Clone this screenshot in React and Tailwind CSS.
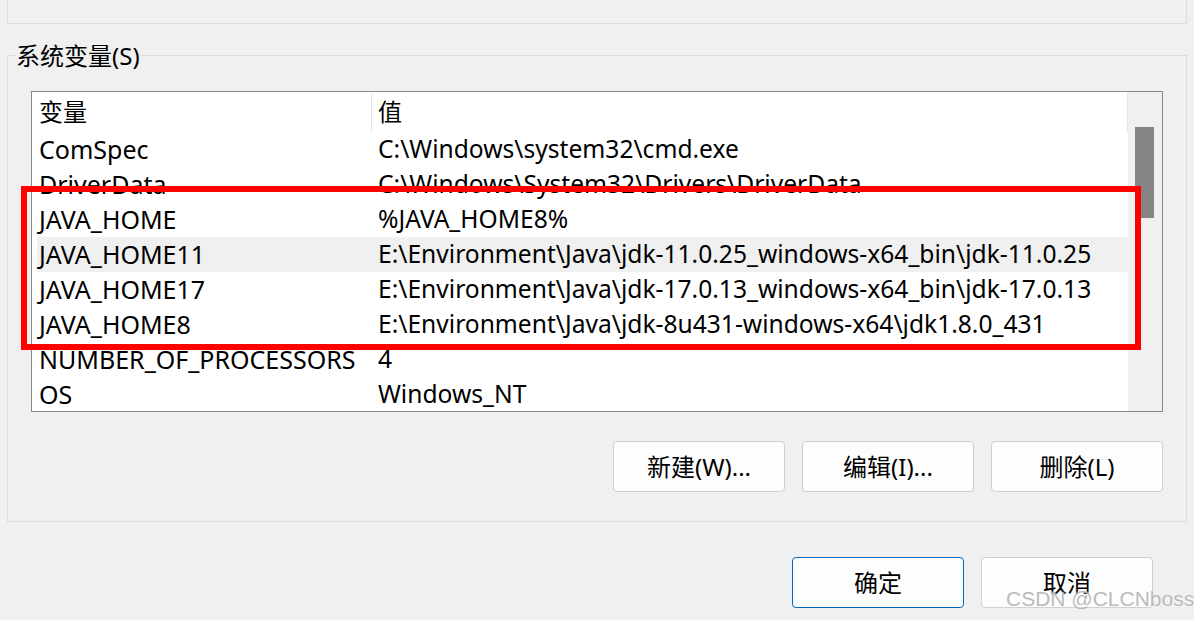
const ROWS = [
  ["ComSpec", "C:\\Windows\\system32\\cmd.exe"],
  ["DriverData", "C:\\Windows\\System32\\Drivers\\DriverData"],
  ["JAVA_HOME", "%JAVA_HOME8%"],
  ["JAVA_HOME11", "E:\\Environment\\Java\\jdk-11.0.25_windows-x64_bin\\jdk-11.0.25"],
  ["JAVA_HOME17", "E:\\Environment\\Java\\jdk-17.0.13_windows-x64_bin\\jdk-17.0.13"],
  ["JAVA_HOME8", "E:\\Environment\\Java\\jdk-8u431-windows-x64\\jdk1.8.0_431"],
  ["NUMBER_OF_PROCESSORS", "4"],
  ["OS", "Windows_NT"],
];

export default function App() {
  return (
    <div
      className="relative w-[1194px] h-[620px] overflow-hidden bg-[#f0f0f0] text-black"
      style={{ fontFamily: '"Noto Sans", "Noto Sans CJK SC", sans-serif' }}
    >
      {/* user variables panel, cut off at the top */}
      <div className="mx-[7px] h-[24px] border-x border-b border-[#dcdcdc]" />

      <fieldset className="mx-[7px] mt-[18px] border border-[#dcdcdc] px-[23px] pb-[29px]">
        <legend className="-ml-[15px] text-[24px] leading-[26px] pt-[1px]">系统变量(S)</legend>

        <div className="mt-[22px] h-[321px] border border-[#828790] bg-white flex overflow-hidden">
          <div className="flex-1 min-w-0">
            <div className="flex h-[40px] items-center text-[24px]">
              <div className="w-[339px] h-full pl-[7px] flex items-center">变量</div>
              <div className="w-px h-[39px] self-start mt-[1px] bg-[#e5e5e5]" />
              <div className="flex-1 h-full pl-[6px] flex items-center">值</div>
              <div className="w-px h-[39px] self-start mt-[1px] bg-[#e5e5e5]" />
            </div>
            {ROWS.map(([name, value]) => (
              <div
                key={name}
                className={`flex h-[35px] items-center whitespace-nowrap ${
                  name === "JAVA_HOME11" ? "bg-[#f0f0f0] ml-[5px] pl-[2px]" : "pl-[7px]"
                }`}
              >
                <div className="w-[339px] shrink-0 text-[25px]">{name}</div>
                <div className="text-[24.6px]">{value}</div>
              </div>
            ))}
          </div>
          <div className="w-[34px] shrink-0 bg-[#f0f0f0] pt-[35px] pl-[7px]">
            <div className="w-[19px] h-[91px] bg-[#858585]" />
          </div>
        </div>

        <div className="mt-[29px] flex justify-end gap-[17px]">
          <Button>新建(W)...</Button>
          <Button>编辑(I)...</Button>
          <Button>删除(L)</Button>
        </div>
      </fieldset>

      <div className="mt-[35px] mr-[41px] flex justify-end gap-[17px]">
        <Button primary>确定</Button>
        <Button>取消</Button>
      </div>

      {/* highlight drawn over the list */}
      <div className="absolute left-[21px] top-[186px] w-[1120px] h-[164px] border-[6px] border-[#ff0000]" />

      <div
        className="absolute left-[1006px] top-[586px] text-[21px] leading-[26px] text-[#a8a8a8]/80 whitespace-nowrap [text-shadow:0_0_2px_#fff]"
        style={{ fontFamily: '"Liberation Sans", sans-serif' }}
      >
        CSDN @CLCNboss
      </div>
    </div>
  );
}

function Button({ children, primary }) {
  return (
    <div
      className={`w-[172px] h-[51px] flex items-center justify-center rounded-[4px] bg-[#fdfdfd] text-[24px] border ${
        primary ? "border-[#0067c0]" : "border-[#d0d0d0]"
      }`}
    >
      {children}
    </div>
  );
}
